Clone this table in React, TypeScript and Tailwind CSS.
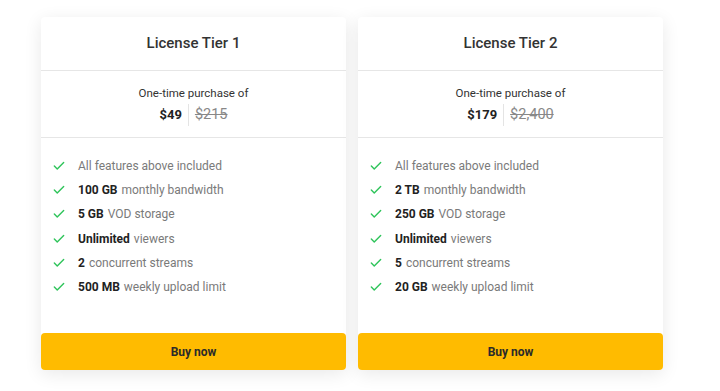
import React from 'react';
import { Check } from 'lucide-react';

type Feature = { strong?: string; rest: string };
type Tier = { name: string; price: string; old: string; features: Feature[] };

const tiers: Tier[] = [
  {
    name: 'License Tier 1',
    price: '$49',
    old: '$215',
    features: [
      { rest: 'All features above included' },
      { strong: '100 GB', rest: 'monthly bandwidth' },
      { strong: '5 GB', rest: 'VOD storage' },
      { strong: 'Unlimited', rest: 'viewers' },
      { strong: '2', rest: 'concurrent streams' },
      { strong: '500 MB', rest: 'weekly upload limit' },
    ],
  },
  {
    name: 'License Tier 2',
    price: '$179',
    old: '$2,400',
    features: [
      { rest: 'All features above included' },
      { strong: '2 TB', rest: 'monthly bandwidth' },
      { strong: '250 GB', rest: 'VOD storage' },
      { strong: 'Unlimited', rest: 'viewers' },
      { strong: '5', rest: 'concurrent streams' },
      { strong: '20 GB', rest: 'weekly upload limit' },
    ],
  },
];

const TierCard: React.FC<{ tier: Tier }> = ({ tier }) => (
  <div className="w-[305px] h-[353px] bg-white rounded-[4px] shadow-[0_4px_18px_rgba(0,0,0,0.09)] flex flex-col">
    <div className="h-[54px] flex items-center justify-center border-b border-[#e6e6e6]">
      <h3 className="text-[15px] font-medium text-[#333]">{tier.name}</h3>
    </div>
    <div className="h-[67px] flex flex-col items-center justify-center pt-[3px] border-b border-[#e6e6e6]">
      <p className="text-[11.5px] leading-[17px] text-[#333]">One-time purchase of</p>
      <div className="flex items-center mt-[2px]">
        <span className="text-[13px] font-bold text-[#222] pr-[6px]">{tier.price}</span>
        <span className="w-px h-[22px] bg-[#e4e4e4]" />
        <span className="text-[14.5px] text-[#888] line-through pl-[6px]">{tier.old}</span>
      </div>
    </div>
    <ul className="pt-[16px] pl-[11px] flex-1">
      {tier.features.map((f, i) => (
        <li key={i} className="flex items-center h-[24.2px] text-[12px]">
          <Check size={14} strokeWidth={2.4} className="text-[#2ec45a] mr-[12px]" />
          {f.strong && <span className="font-bold text-[#222] mr-[4px]">{f.strong}</span>}
          <span className="text-[#7a7a7a]">{f.rest}</span>
        </li>
      ))}
    </ul>
    <button className="h-[37px] w-full rounded-[4px] bg-[#ffbb00] text-[12px] font-bold text-[#2a2a2a]">
      Buy now
    </button>
  </div>
);

export default function App() {
  return (
    <div className="w-[720px] h-[391px] bg-white font-['Roboto',sans-serif] pt-[17px] pl-[41px]">
      <div className="flex gap-[12px]">
        {tiers.map((t) => (
          <TierCard key={t.name} tier={t} />
        ))}
      </div>
    </div>
  );
}
